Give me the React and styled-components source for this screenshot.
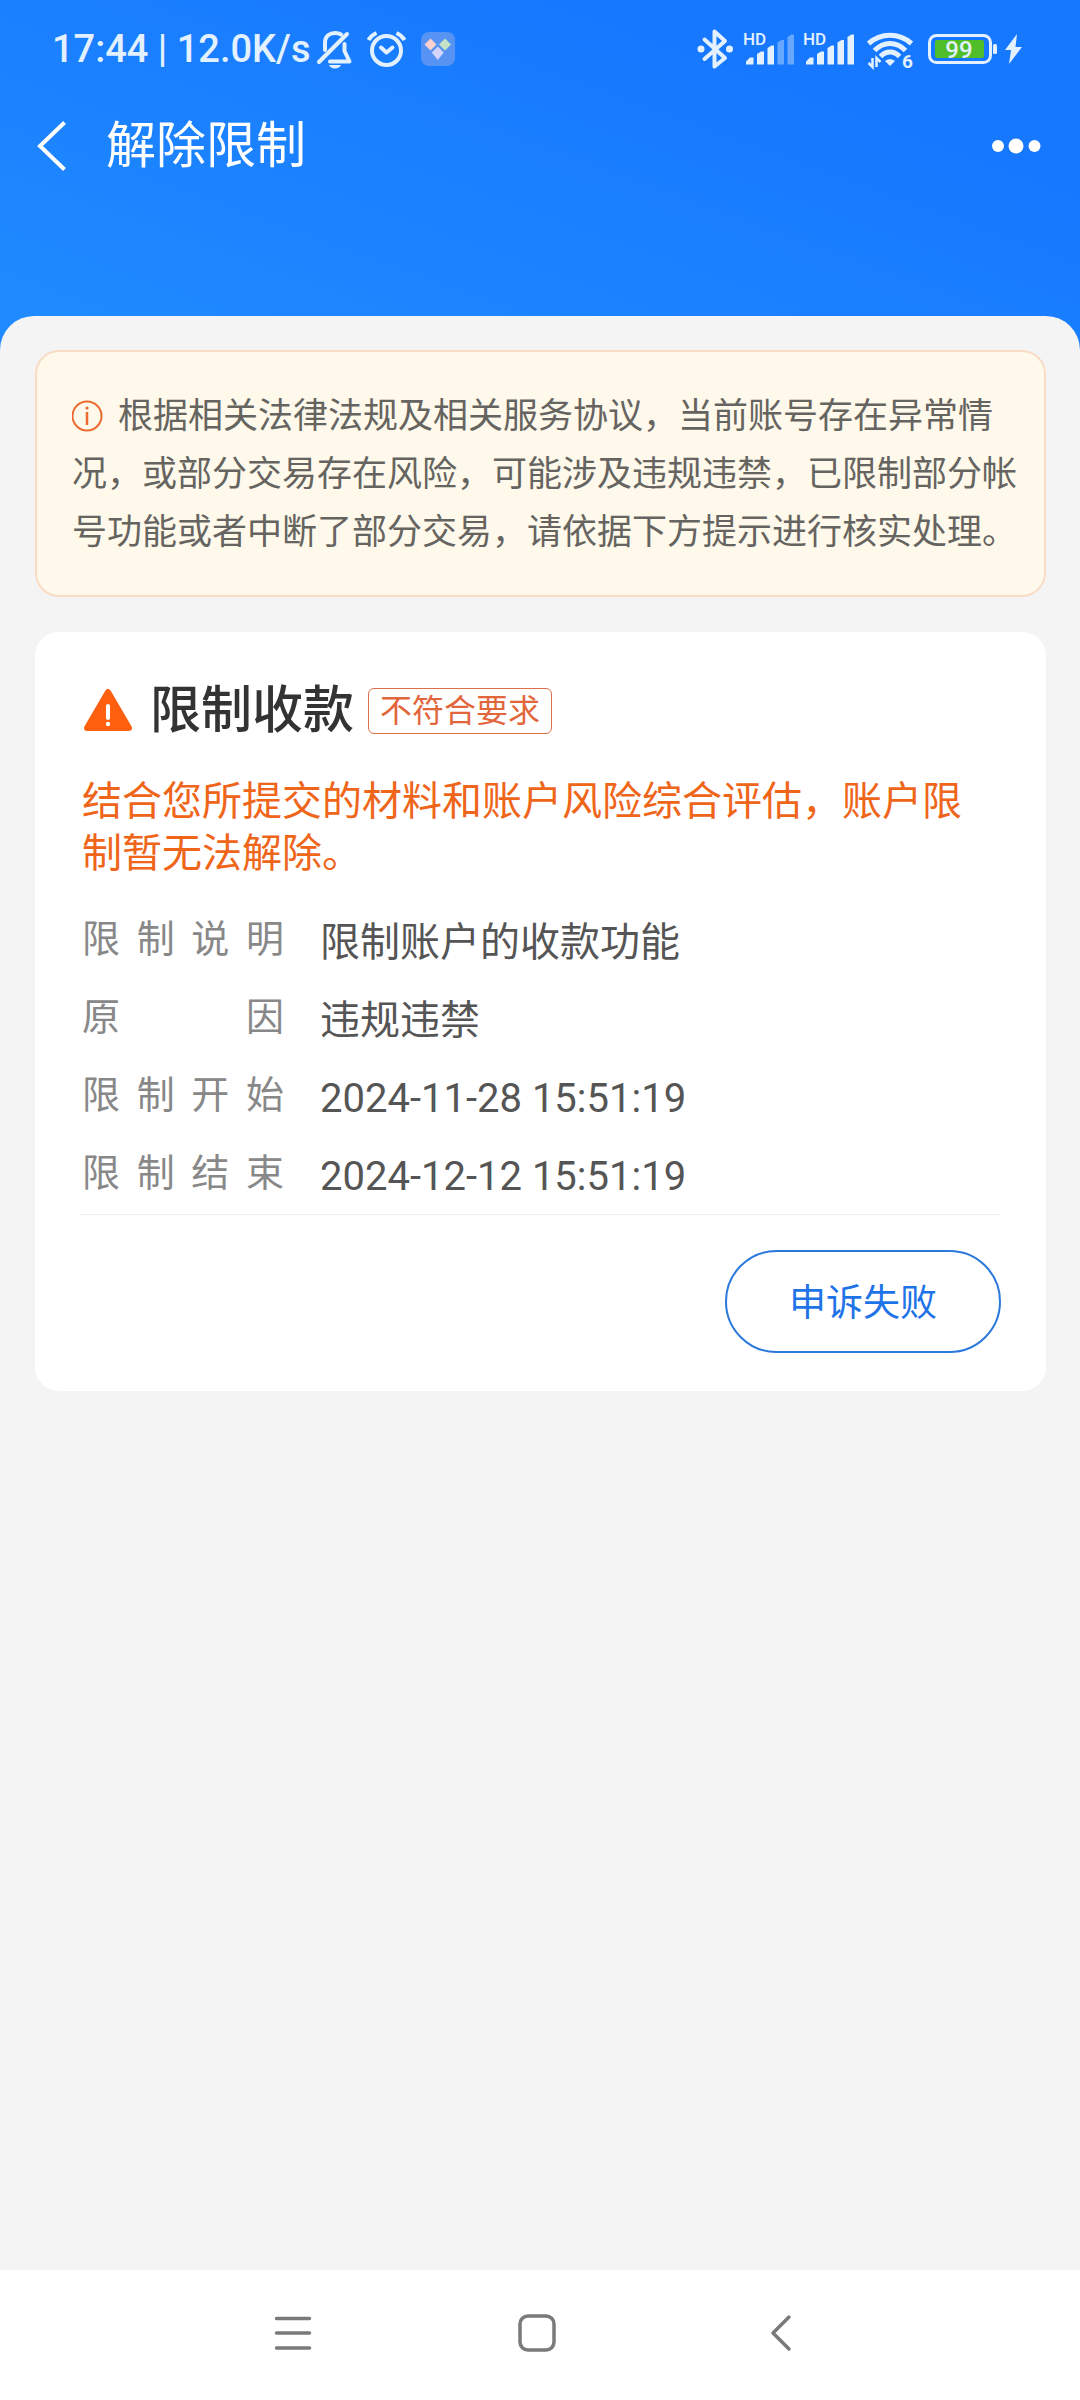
import styled, { createGlobalStyle } from "styled-components";

const details = [
  { label: "限制说明", value: "限制账户的收款功能" },
  { label: "原因", value: "违规违禁" },
  { label: "限制开始", value: "2024-11-28 15:51:19" },
  { label: "限制结束", value: "2024-12-12 15:51:19" },
];

// 5 bars, each one has a slanted left corner
const bars = [
  "M3 37.5V34.5L7 30.5H10.5V37.5Z",
  "M14 37.5V27L18 24.5H21V37.5Z",
  "M24.5 37.5V21L28.5 18.5H31V37.5Z",
  "M34.5 37.5V15.5L38.5 13H41V37.5Z",
  "M44.5 37.5V10L48.5 7.5H51V37.5Z",
];

function SignalIcon({ level }) {
  return (
    <StatusIcon width="52" height="44" viewBox="0 0 52 44">
      <IconText x="0" y="18" $size={17}>
        HD
      </IconText>
      {bars.map((d, index) => (
        <path
          key={d}
          d={d}
          fill="currentColor"
          opacity={index < level ? 1 : 0.4}
        />
      ))}
    </StatusIcon>
  );
}

function MutedBellIcon() {
  return (
    <StatusIcon width="36" height="44" viewBox="0 0 36 44">
      <g
        fill="none"
        stroke="currentColor"
        strokeWidth="4"
        strokeLinecap="round"
        strokeLinejoin="round"
      >
        <path d="M2 35L30 7" />
        <path d="M8 23V16C8 9 13 6 18 6C20.500 6 22.500 6.500 24 7.500" />
        <path d="M27.500 17V24L32.500 34.500H13" />
      </g>
      <path d="M12 38H24C23 40 21 41.500 18 41.500S13 40 12 38Z" fill="currentColor" />
    </StatusIcon>
  );
}

function AlarmIcon() {
  return (
    <StatusIcon width="40" height="44" viewBox="0 0 40 44">
      <g fill="none" stroke="currentColor" strokeWidth="4" strokeLinejoin="round">
        <circle cx="19.500" cy="23.500" r="14.500" />
        <path d="M14 20.500L19.500 25.500L25.500 20.500" strokeLinecap="round" />
        <path d="M1.500 13C3.500 9.500 6 7.500 9.500 6" />
        <path d="M29.500 6C33 7.500 35.500 9.500 37.500 13" />
      </g>
    </StatusIcon>
  );
}

function AppIcon() {
  return (
    <StatusIcon width="34" height="44" viewBox="0 0 34 44">
      <rect y="5" width="34" height="34" rx="8" fill="#5793f3" />
      <path d="M9.500 11.500L15.500 17.500L9.500 23.500L3.500 17.500Z" fill="#fbd0cf" />
      <path d="M24 11.500L30 17.500L24 23.500L18 17.500Z" fill="#c3e3c4" />
      <path d="M16.800 19.500L22.800 25.500L16.800 33L10.800 25.500Z" fill="#d3d4fb" />
    </StatusIcon>
  );
}

function BluetoothIcon() {
  return (
    <StatusIcon width="38" height="44" viewBox="0 0 38 44">
      <path
        d="M7.500 12.500L28 31L17.500 39.500V4.500L28 14L7.500 32"
        fill="none"
        stroke="currentColor"
        strokeWidth="4"
        strokeLinecap="round"
        strokeLinejoin="round"
      />
      <circle cx="4" cy="22" r="3.500" fill="currentColor" />
      <circle cx="32.500" cy="22" r="3.500" fill="currentColor" />
    </StatusIcon>
  );
}

function WifiIcon() {
  return (
    <StatusIcon width="56" height="44" viewBox="0 0 56 44">
      <g fill="none" stroke="currentColor" strokeWidth="5">
        <path d="M5.500 16.500C18 5.500 36 5.500 48.500 16.500" />
        <path d="M11.500 23.500C20.500 14 33.500 14 42.500 23.500" />
        <path d="M17.500 29.500C23 23.500 31 23.500 36.500 29.500" />
      </g>
      <path d="M22 34C25 31.500 29 31.500 32 34L27 39Z" fill="currentColor" />
      <path
        d="M9.500 31V40L5.500 36M13.500 40V31L17.500 35"
        fill="none"
        stroke="currentColor"
        strokeWidth="2.500"
      />
      <IconText x="39" y="41" $size={19} $bold>
        6
      </IconText>
    </StatusIcon>
  );
}

function BatteryIcon({ percent }) {
  return (
    <StatusIcon width="70" height="44" viewBox="0 0 70 44">
      <rect
        x="2.500"
        y="8.500"
        width="61"
        height="27"
        rx="7"
        fill="none"
        stroke="currentColor"
        strokeWidth="3"
      />
      <rect x="8" y="13" width="49" height="18" rx="2" fill="#4fbe29" />
      <rect x="66" y="17" width="4" height="10" rx="1.500" fill="currentColor" />
      <IconText x="32" y="31" textAnchor="middle" $size={24}>
        {percent}
      </IconText>
    </StatusIcon>
  );
}

function App() {
  return (
    <>
      <GlobalStyle />
      <Screen>
        <StatusBar>
          <StatusGroup $gap={6}>
            <StatusText>17:44 | 12.0K/s</StatusText>
            <StatusGroup $gap={14}>
              <MutedBellIcon />
              <AlarmIcon />
              <AppIcon />
            </StatusGroup>
          </StatusGroup>
          <StatusGroup $gap={8}>
            <BluetoothIcon />
            <SignalIcon level={3} />
            <SignalIcon level={5} />
            <WifiIcon />
            <BatteryIcon percent={99} />
            <StatusIcon width="18" height="44" viewBox="0 0 18 44">
              <path d="M12 7L0 23H6L4 37L17 20H10.500Z" fill="currentColor" />
            </StatusIcon>
          </StatusGroup>
        </StatusBar>

        <TitleBar>
          <IconButton type="button" aria-label="返回">
            <svg width="30" height="50" viewBox="0 0 30 50">
              <path d="M27.500 1.500L3 25L27.500 48.500" fill="none" stroke="#fff" strokeWidth="4" />
            </svg>
          </IconButton>
          <PageTitle>解除限制</PageTitle>
          <IconButton type="button" aria-label="更多">
            <svg width="50" height="50" viewBox="0 0 50 50">
              <circle cx="7" cy="25" r="6" fill="#fff" />
              <circle cx="25" cy="25" r="7.500" fill="#fff" />
              <circle cx="43.500" cy="25" r="6" fill="#fff" />
            </svg>
          </IconButton>
        </TitleBar>

        <Sheet>
          <Notice>
            <NoticeIcon width="32" height="32" viewBox="0 0 32 32">
              <circle cx="15" cy="16" r="14.500" fill="none" stroke="#ec6a2e" strokeWidth="2" />
              <path d="M15 12V25" stroke="#ec6a2e" strokeWidth="2.500" />
              <circle cx="15" cy="8" r="1.600" fill="#ec6a2e" />
            </NoticeIcon>
            根据相关法律法规及相关服务协议，当前账号存在异常情况，或部分交易存在风险，可能涉及违规违禁，已限制部分帐号功能或者中断了部分交易，请依据下方提示进行核实处理。
          </Notice>

          <Card>
            <CardHeader>
              <svg width="56" height="48" viewBox="0 0 56 48">
                <path
                  d="M28 5L49 41H7Z"
                  fill="#ff6010"
                  stroke="#ff6010"
                  strokeWidth="6"
                  strokeLinejoin="round"
                />
                <path d="M28 19V31" stroke="#fff" strokeWidth="4" strokeLinecap="round" />
                <circle cx="28" cy="37" r="2.200" fill="#fff" />
              </svg>
              <CardTitle>限制收款</CardTitle>
              <Tag>不符合要求</Tag>
            </CardHeader>
            <Result>结合您所提交的材料和账户风险综合评估，账户限制暂无法解除。</Result>
            <DetailList>
              {details.map((item) => (
                <DetailRow key={item.label}>
                  <DetailLabel>{item.label}</DetailLabel>
                  <DetailValue>{item.value}</DetailValue>
                </DetailRow>
              ))}
            </DetailList>
            <CardFooter>
              <AppealButton type="button">申诉失败</AppealButton>
            </CardFooter>
          </Card>
        </Sheet>

        <NavBar>
          <IconButton type="button" aria-label="菜单">
            <svg width="44" height="44" viewBox="0 0 44 44">
              <path
                d="M5.500 7.500H38.500M5.500 22H38.500M5.500 37H38.500"
                stroke="#7a7a7a"
                strokeWidth="3.500"
                strokeLinecap="round"
              />
            </svg>
          </IconButton>
          <IconButton type="button" aria-label="主页">
            <svg width="44" height="44" viewBox="0 0 44 44">
              <rect
                x="5"
                y="5"
                width="34"
                height="34"
                rx="8"
                fill="none"
                stroke="#7a7a7a"
                strokeWidth="3.500"
              />
            </svg>
          </IconButton>
          <IconButton type="button" aria-label="后退">
            <svg width="44" height="44" viewBox="0 0 44 44">
              <path
                d="M30 6L14 22L30 38"
                fill="none"
                stroke="#7a7a7a"
                strokeWidth="3.500"
                strokeLinecap="round"
                strokeLinejoin="round"
              />
            </svg>
          </IconButton>
        </NavBar>
      </Screen>
    </>
  );
}

export default App;

//  Styled Components
const GlobalStyle = createGlobalStyle`
  * {
    box-sizing: border-box;
    margin: 0;
    padding: 0;
  }

  body {
    background: #f4f4f4;
    font-family: Roboto, "Noto Sans CJK SC", sans-serif;
  }

  svg {
    display: block;
    flex-shrink: 0;
  }
`;

const Screen = styled.div`
  display: flex;
  flex-direction: column;
  min-height: 100vh;
  background: linear-gradient(200deg, #1677ff 20%, #208bff 95%) no-repeat;
  background-size: 100% 360px;
`;

const StatusBar = styled.div`
  display: flex;
  justify-content: space-between;
  align-items: center;
  height: 98px;
  padding: 0 57px 0 52px;
  color: #e3f1ff;
`;

const StatusGroup = styled.div`
  display: flex;
  align-items: center;
  gap: ${(props) => props.$gap}px;
`;

const StatusText = styled.span`
  font-size: 38px;
  font-weight: 500;
  line-height: 44px;
  white-space: nowrap;
`;

const StatusIcon = styled.svg`
  overflow: visible;
`;

const IconText = styled.text`
  fill: currentColor;
  font-family: Roboto, sans-serif;
  font-size: ${(props) => props.$size}px;
  font-weight: ${(props) => (props.$bold ? 700 : 500)};
`;

const TitleBar = styled.header`
  display: flex;
  align-items: center;
  gap: 39px;
  height: 218px;
  padding: 0 39px 122px 37px;
`;

const IconButton = styled.button`
  border: none;
  background: none;
  cursor: pointer;
`;

const PageTitle = styled.h1`
  flex: 1;
  color: #ffffff;
  font-size: 50px;
  font-weight: 400;
  line-height: 72px;
`;

const Sheet = styled.main`
  flex: 1;
  display: flex;
  flex-direction: column;
  gap: 35px;
  padding: 34px 34px 34px 35px;
  border-radius: 34px 34px 0 0;
  background: #f4f4f4;
`;

const Notice = styled.p`
  padding: 36px 20px 33px 35px;
  border: 2px solid #f9dcc6;
  border-radius: 24px;
  background: #fef9eb;
  color: #666460;
  font-size: 35px;
  line-height: 58px;
`;

const NoticeIcon = styled.svg`
  display: inline-block;
  margin-right: 14px;
  vertical-align: -4px;
`;

const Card = styled.section`
  padding: 46px 45px 38px;
  border-radius: 24px;
  background: #ffffff;
`;

const CardHeader = styled.div`
  display: flex;
  align-items: center;
  gap: 14px;
  height: 66px;
`;

const CardTitle = styled.h2`
  color: #333333;
  font-size: 51px;
  font-weight: 500;
  line-height: 66px;
`;

const Tag = styled.span`
  padding: 0 11px;
  border: 1px solid #dd704a;
  border-radius: 6px;
  color: #e2663c;
  font-size: 32px;
  line-height: 44px;
`;

const Result = styled.p`
  margin-top: 32px;
  padding: 0 10px 0 2px;
  color: #ef6519;
  font-size: 40px;
  line-height: 52px;
`;

const DetailList = styled.dl`
  margin-top: 22px;
  border-bottom: 1px solid #eeeeee;
`;

const DetailRow = styled.div`
  display: flex;
  gap: 36px;
  height: 78px;
  padding-left: 2px;
`;

const DetailLabel = styled.dt`
  width: 202px;
  color: #888888;
  font-size: 38px;
  line-height: 74px;
  text-align-last: justify;
`;

const DetailValue = styled.dd`
  color: #555555;
  font-size: 40px;
  line-height: 82px;
`;

const CardFooter = styled.div`
  display: flex;
  justify-content: flex-end;
  padding-top: 35px;
`;

const AppealButton = styled.button`
  padding: 26px 62px 22px;
  border: 2px solid #2b78dc;
  border-radius: 52px;
  background: #ffffff;
  color: #1f73e8;
  font-family: inherit;
  font-size: 37px;
  line-height: 51px;
  cursor: pointer;
`;

const NavBar = styled.nav`
  display: flex;
  justify-content: center;
  align-items: center;
  gap: 200px;
  height: 130px;
  padding: 0 7px 5px 0;
  background: #ffffff;
`;
